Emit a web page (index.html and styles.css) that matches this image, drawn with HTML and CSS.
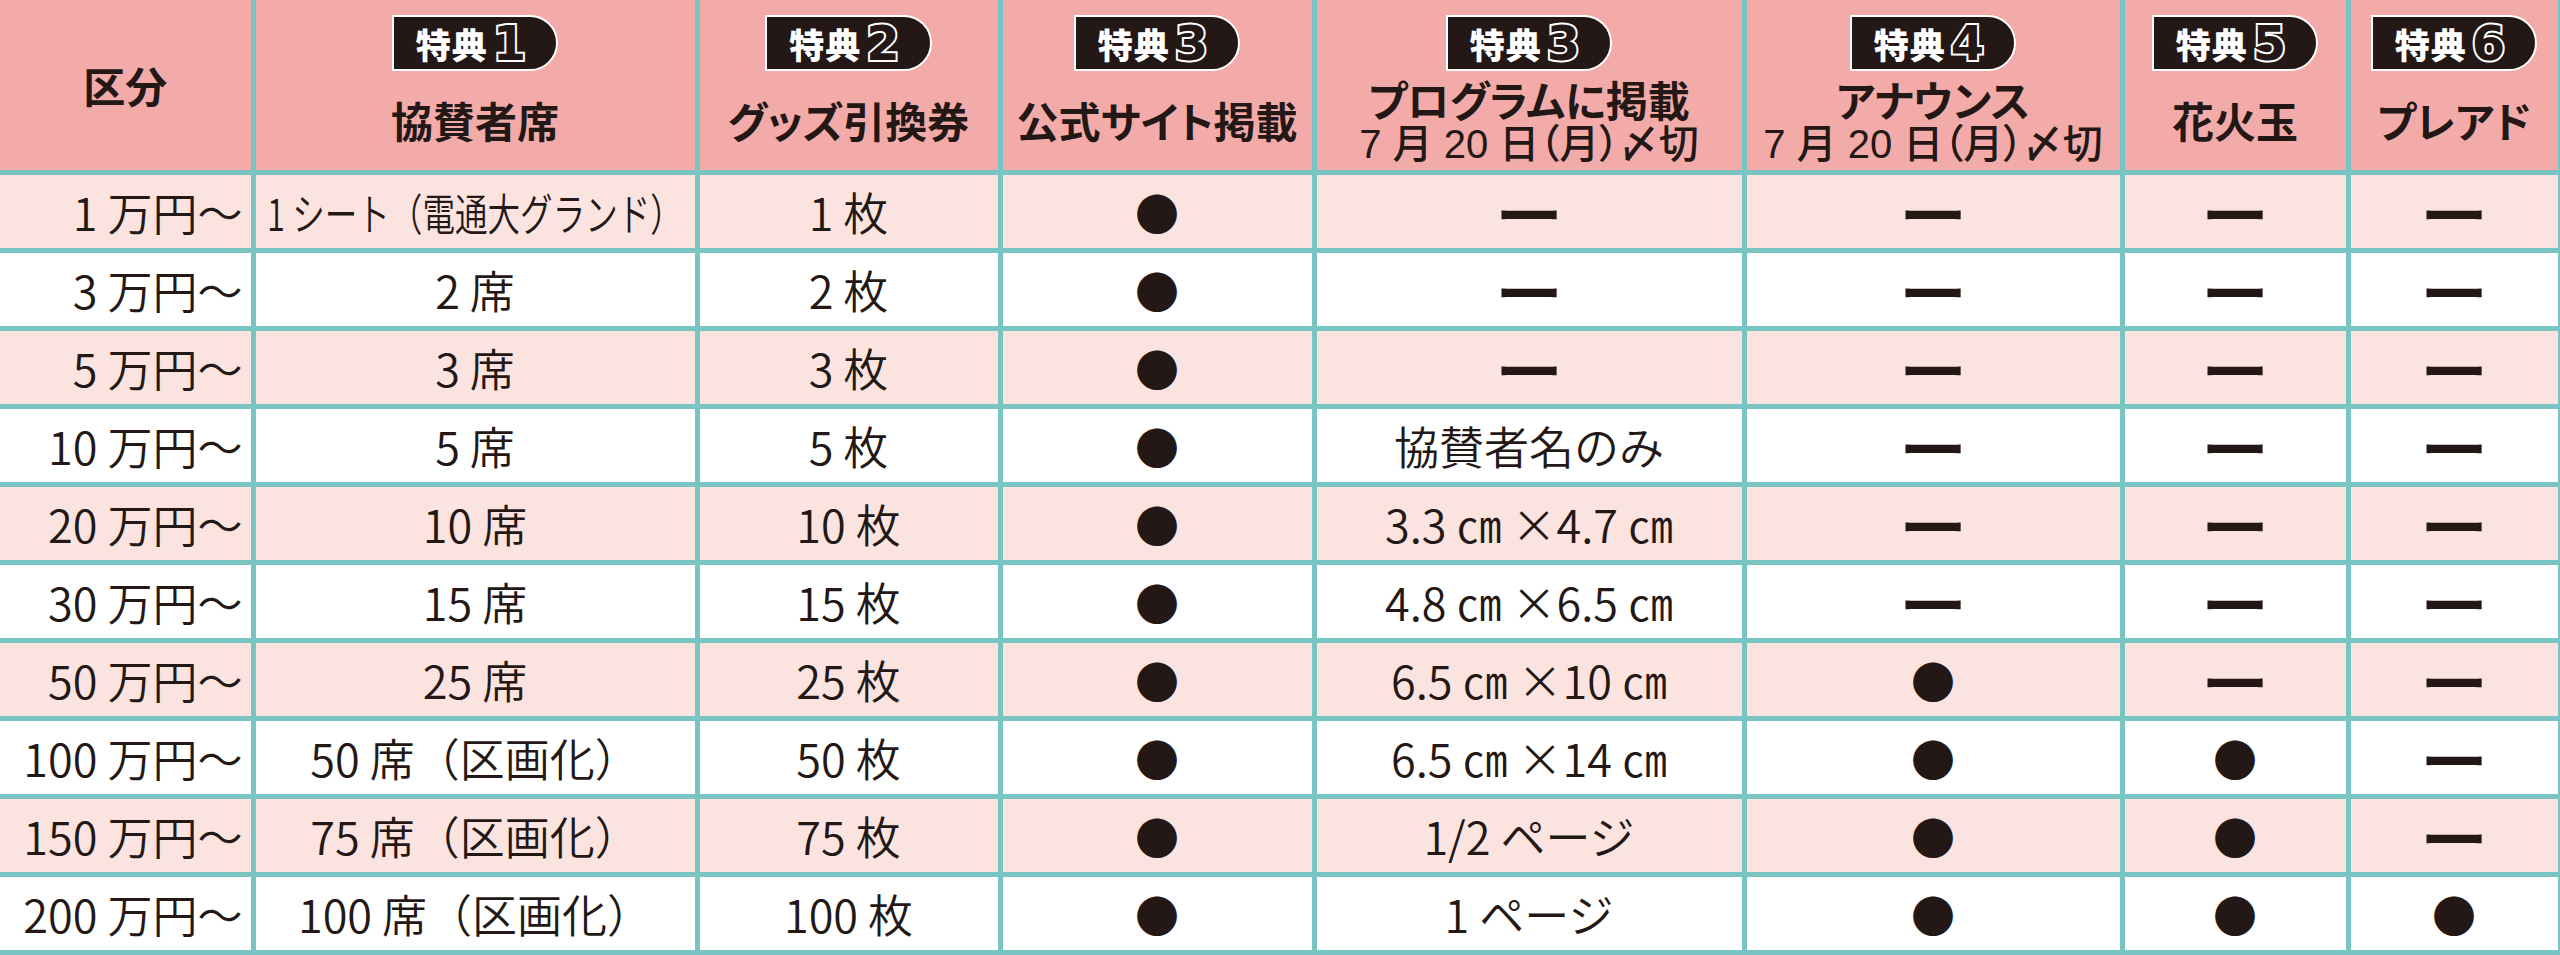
FILE: index.html
```html
<!DOCTYPE html>
<html lang="ja">
<head>
<meta charset="utf-8">
<title>協賛特典一覧</title>
<link rel="stylesheet" href="styles.css">
</head>
<body>
<table class="perks">
  <colgroup>
    <col class="c1"><col class="c2"><col class="c3"><col class="c4"><col class="c5"><col class="c6"><col class="c7"><col class="c8">
  </colgroup>
  <thead>
    <tr>
      <th class="plain">区分</th>
      <th><div class="head"><span class="badge">特典<span class="num">1</span></span><div class="title">協賛者席</div></div></th>
      <th><div class="head"><span class="badge">特典<span class="num">2</span></span><div class="title">グッズ引換券</div></div></th>
      <th><div class="head"><span class="badge">特典<span class="num">3</span></span><div class="title">公式サイト掲載</div></div></th>
      <th><div class="head"><span class="badge">特典<span class="num">3</span></span><div class="title two"><span>プログラムに掲載</span><span class="sub">7 月 20 日（月）〆切</span></div></div></th>
      <th><div class="head"><span class="badge">特典<span class="num">4</span></span><div class="title two"><span>アナウンス</span><span class="sub">7 月 20 日（月）〆切</span></div></div></th>
      <th><div class="head"><span class="badge">特典<span class="num">5</span></span><div class="title">花火玉</div></div></th>
      <th><div class="head"><span class="badge">特典<span class="num">6</span></span><div class="title">プレアド</div></div></th>
    </tr>
  </thead>
  <tbody>
    <tr class="alt">
      <td class="price">1 万円～</td><td><span class="narrow">1 シート（電通大グランド）</span></td><td>1 枚</td><td class="dot">●</td><td class="dash"><span>ー</span></td><td class="dash"><span>ー</span></td><td class="dash"><span>ー</span></td><td class="dash"><span>ー</span></td>
    </tr>
    <tr>
      <td class="price">3 万円～</td><td>2 席</td><td>2 枚</td><td class="dot">●</td><td class="dash"><span>ー</span></td><td class="dash"><span>ー</span></td><td class="dash"><span>ー</span></td><td class="dash"><span>ー</span></td>
    </tr>
    <tr class="alt">
      <td class="price">5 万円～</td><td>3 席</td><td>3 枚</td><td class="dot">●</td><td class="dash"><span>ー</span></td><td class="dash"><span>ー</span></td><td class="dash"><span>ー</span></td><td class="dash"><span>ー</span></td>
    </tr>
    <tr>
      <td class="price">10 万円～</td><td>5 席</td><td>5 枚</td><td class="dot">●</td><td>協賛者名のみ</td><td class="dash"><span>ー</span></td><td class="dash"><span>ー</span></td><td class="dash"><span>ー</span></td>
    </tr>
    <tr class="alt">
      <td class="price">20 万円～</td><td>10 席</td><td>10 枚</td><td class="dot">●</td><td>3.3 ㎝ ×4.7 ㎝</td><td class="dash"><span>ー</span></td><td class="dash"><span>ー</span></td><td class="dash"><span>ー</span></td>
    </tr>
    <tr>
      <td class="price">30 万円～</td><td>15 席</td><td>15 枚</td><td class="dot">●</td><td>4.8 ㎝ ×6.5 ㎝</td><td class="dash"><span>ー</span></td><td class="dash"><span>ー</span></td><td class="dash"><span>ー</span></td>
    </tr>
    <tr class="alt">
      <td class="price">50 万円～</td><td>25 席</td><td>25 枚</td><td class="dot">●</td><td>6.5 ㎝ ×10 ㎝</td><td class="dot">●</td><td class="dash"><span>ー</span></td><td class="dash"><span>ー</span></td>
    </tr>
    <tr>
      <td class="price">100 万円～</td><td>50 席（区画化）</td><td>50 枚</td><td class="dot">●</td><td>6.5 ㎝ ×14 ㎝</td><td class="dot">●</td><td class="dot">●</td><td class="dash"><span>ー</span></td>
    </tr>
    <tr class="alt">
      <td class="price">150 万円～</td><td>75 席（区画化）</td><td>75 枚</td><td class="dot">●</td><td>1/2 ページ</td><td class="dot">●</td><td class="dot">●</td><td class="dash"><span>ー</span></td>
    </tr>
    <tr>
      <td class="price">200 万円～</td><td>100 席（区画化）</td><td>100 枚</td><td class="dot">●</td><td>1 ページ</td><td class="dot">●</td><td class="dot">●</td><td class="dot">●</td>
    </tr>
  </tbody>
</table>
</body>
</html>
```

FILE: styles.css
```css
html, body {
  margin: 0;
  padding: 0;
  background: #ffffff;
}

body {
  width: 2560px;
  height: 955px;
  overflow: hidden;
  font-family: "Noto Sans CJK JP", "Noto Sans", sans-serif;
  color: #231815;
}

.perks {
  width: 2560px;
  border-collapse: collapse;
  table-layout: fixed;
}

.c1 { width: 253px; }
.c2 { width: 444px; }
.c3 { width: 303px; }
.c4 { width: 314px; }
.c5 { width: 430px; }
.c6 { width: 378px; }
.c7 { width: 226px; }
.c8 { width: 212px; }

.perks th,
.perks td {
  border: 5px solid #79c5c4;
  padding: 0;
  text-align: center;
  vertical-align: middle;
}

.perks tr > :first-child {
  border-left: none;
}

.perks thead th {
  border-top: none;
  background: #f3abaa;
  height: 170px;
  font-weight: 700;
  font-size: 41px;
  line-height: 1;
  font-feature-settings: "palt";
}

.perks thead th.plain {
  font-size: 42px;
  font-weight: 700;
}

.head {
  height: 170px;
  display: flex;
  flex-direction: column;
  align-items: center;
}

.badge {
  margin-top: 15px;
  height: 56px;
  box-sizing: border-box;
  display: inline-flex;
  align-items: center;
  gap: 5px;
  padding: 0 30px 0 22px;
  background: #231815;
  color: #ffffff;
  border: 2px solid #ffffff;
  border-radius: 0 30px 30px 0;
  font-size: 35px;
  font-weight: 900;
  letter-spacing: 1px;
}

.num {
  font-family: "DejaVu Sans", "Liberation Sans", sans-serif;
  font-weight: 700;
  font-size: 48px;
  color: #231815;
  -webkit-text-stroke: 4px #ffffff;
  paint-order: stroke fill;
  letter-spacing: 0;
  line-height: 1;
}

.title {
  flex: 1;
  display: flex;
  flex-direction: column;
  justify-content: center;
  align-items: center;
  font-weight: 700;
  font-size: 42px;
  padding-bottom: 2px;
}

.title.two {
  gap: 0;
  font-family: "Liberation Sans", "Noto Sans CJK JP", sans-serif;
  font-size: 42px;
  padding-top: 6px;
}

.title .sub {
  font-weight: 500;
  font-size: 40px;
}

.perks tbody tr {
  height: 78px;
}

.perks tbody tr.alt td {
  background: #fbe4e0;
}

.perks tbody td {
  font-size: 45px;
  font-weight: 350;
  line-height: 1;
  white-space: nowrap;
}

.perks tbody td.price {
  text-align: right;
  padding-right: 8px;
}

.narrow {
  display: inline-block;
  transform: scaleX(0.74);
  font-size: 44px;
  margin: 0 -74px;
}

.perks tbody td.dot {
  font-size: 44px;
  font-weight: 400;
}

.perks tbody td.dash span {
  display: inline-block;
  font-size: 46px;
  font-weight: 900;
  transform: scaleX(1.45);
}

.perks tbody tr:last-child td {
  border-bottom: 5px solid #79c5c4;
}
```
